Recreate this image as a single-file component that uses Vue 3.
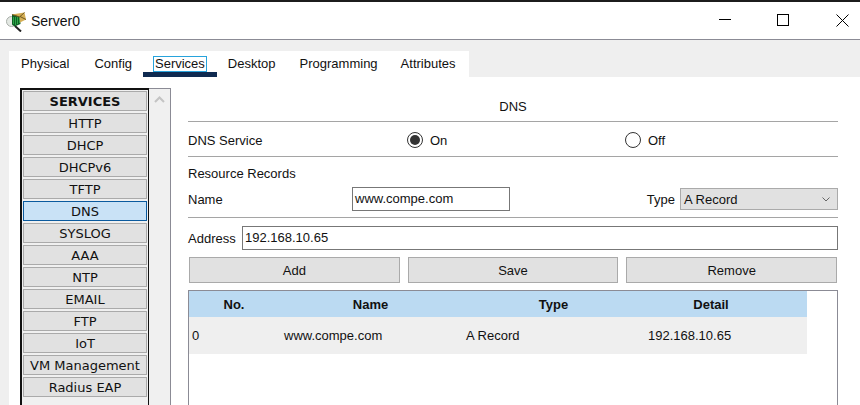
<script setup>
const tabs = ['Physical', 'Config', 'Services', 'Desktop', 'Programming', 'Attributes']
const services = ['HTTP', 'DHCP', 'DHCPv6', 'TFTP', 'DNS', 'SYSLOG', 'AAA', 'NTP', 'EMAIL', 'FTP', 'IoT', 'VM Management', 'Radius EAP']
</script>

<template>
  <div class="window">
    <header class="titlebar">
      <svg class="app-icon" width="21" height="20" viewBox="0 0 21 20">
        <circle cx="5.500" cy="9.500" r="5" fill="#e3e8e3" stroke="#a9aea9" />
        <path d="M9 14l6 5.500" stroke="#222" stroke-width="2" />
        <path d="M6 3l8-1 .5 10-6 2.500-2.500-2z" fill="#0f5f26" />
        <path d="M7.500 5v7M9.500 5v8M11.500 5v7M13.500 5v6" stroke="#2aa746" stroke-width="1" />
        <path d="M5.500 2.500L18.500.5 20 7.500l-6 3-.5-6z" fill="#d4ae55" />
        <path d="M6 2.500l7.500 2.500 5-4.500M20 7.500l-6-3" stroke="#6f5820" fill="none" />
      </svg>
      <span class="title">Server0</span>
      <div class="controls">
        <svg width="13" height="13" viewBox="0 0 13 13"><path d="M0 5.500h12" stroke="#000" fill="none" /></svg>
        <svg width="13" height="13" viewBox="0 0 13 13"><rect x=".5" y=".5" width="11" height="11" stroke="#000" fill="none" /></svg>
        <svg class="close" width="13" height="13" viewBox="0 0 13 13"><path d="M.5.5l12 12M12.500.5l-12 12" stroke="#000" fill="none" /></svg>
      </div>
    </header>

    <div class="body">
      <nav class="tabs">
        <div v-for="t in tabs" :key="t" class="tab" :class="{ active: t === 'Services' }">
          <span class="tab-label">{{ t }}</span>
        </div>
      </nav>

      <div class="panel">
        <aside class="side">
          <div class="list">
            <div class="item head">SERVICES</div>
            <div v-for="s in services" :key="s" class="item" :class="{ selected: s === 'DNS' }">{{ s }}</div>
          </div>
          <div class="scroll">
            <svg width="11" height="7" viewBox="0 0 11 7"><path d="M1 6l4.500-4.500L10 6" stroke="#c4c4c4" stroke-width="2" fill="none" /></svg>
          </div>
        </aside>

        <main class="content">
          <div class="heading">DNS</div>
          <div class="row service">
            <span class="lbl-service">DNS Service</span>
            <span class="radio on"></span><span class="opt-on">On</span>
            <span class="radio"></span><span>Off</span>
          </div>
          <div class="rr">Resource Records</div>
          <div class="row name-row">
            <span class="lbl-name">Name</span>
            <div class="input name-input">www.compe.com</div>
            <span class="lbl-type">Type</span>
            <div class="select">
              <span>A Record</span>
              <svg width="8" height="5" viewBox="0 0 8 5"><path d="M.5.5L4 4 7.500.5" stroke="#666" fill="none" /></svg>
            </div>
          </div>
          <div class="row addr-row">
            <span class="lbl-addr">Address</span>
            <div class="input addr-input">192.168.10.65</div>
          </div>
          <div class="buttons">
            <div class="btn">Add</div>
            <div class="btn">Save</div>
            <div class="btn">Remove</div>
          </div>
          <div class="table">
            <div class="t-row t-head">
              <span>No.</span><span>Name</span><span>Type</span><span>Detail</span>
            </div>
            <div class="t-row t-body">
              <span>0</span><span>www.compe.com</span><span>A Record</span><span>192.168.10.65</span>
            </div>
          </div>
        </main>
      </div>
    </div>
  </div>
</template>

<style scoped>
.window {
  width: 860px;
  height: 405px;
  overflow: hidden;
  background: #fff;
  border-top: 2px solid #1c1c1c;
  box-sizing: border-box;
  font-family: "Liberation Sans", Arial, sans-serif;
  font-size: 13px;
  color: #111;
  display: flex;
  flex-direction: column;
}
.titlebar {
  height: 37px;
  flex: none;
  display: flex;
  align-items: center;
  padding-left: 6px;
  border-bottom: 1px solid #8b8b95;
  box-sizing: content-box;
}
.app-icon { margin-right: 4px; margin-top: 3px; }
.title { font-size: 14px; }
.controls {
  margin-left: auto;
  display: flex;
  gap: 45px;
  padding-right: 11px;
}
.close { margin-left: 1px; }
.body {
  flex: 1;
  min-height: 0;
  background: #efefef;
  padding: 11px 0 0 9px;
  display: flex;
  flex-direction: column;
}
.tabs {
  width: 460px;
  height: 26px;
  flex: none;
  background: #fff;
  display: flex;
  box-sizing: border-box;
}
.tab {
  position: relative;
  padding: 5px 10px 0;
  line-height: 14px;
}
.tab:nth-child(2) { padding-left: 11px; padding-right: 9px; }
.tab:nth-child(4) { padding-left: 9px; }
.tab:nth-child(6) { padding-left: 9px; }
.tab-label { display: inline-block; padding: 0 1px; border: 1px solid transparent; }
.tab.active::after {
  content: "";
  position: absolute;
  left: 0;
  right: 0;
  bottom: 0;
  height: 5px;
  background: #0f2a50;
}
.tab.active .tab-label { border-color: #27a3dc; }
.panel {
  flex: 1;
  min-height: 0;
  background: #fff;
  display: flex;
  padding: 11px 22px 0 11px;
}
.side {
  width: 151px;
  box-sizing: border-box;
  flex: none;
  display: flex;
  border-top: 1px solid #8b8b95;
  border-right: 1px solid #8b8b95;
}
.list {
  width: 129px;
  flex: none;
  box-sizing: border-box;
  margin-top: -1px;
  border: solid #111;
  border-width: 2px 1px 0 2px;
  background: #f0f0f0;
  padding: 1px 1px 0;
  display: flex;
  flex-direction: column;
  gap: 2px;
}
.item {
  width: 124px;
  height: 20px;
  box-sizing: border-box;
  flex: none;
  border: 1px solid #aaa;
  background: #e1e1e1;
  text-align: center;
  font-family: "DejaVu Sans", sans-serif;
  font-size: 13px;
  line-height: 19px;
}
.item.head { font-weight: 700; }
.item.selected { background: #c9e2f6; border-color: #0a5a9e; line-height: 20px; }
.scroll {
  flex: 1;
  background: #f0f0f0;
  display: flex;
  justify-content: center;
  padding-top: 7px;
  align-items: flex-start;
}
.content {
  flex: 1;
  margin-left: 17px;
  min-width: 0;
}
.heading {
  height: 33px;
  line-height: 38px;
  text-align: center;
  border-bottom: 1px solid #a5a5a5;
}
.row { display: flex; align-items: center; }
.service {
  height: 32px;
  padding-top: 2px;
  border-bottom: 1px solid #a5a5a5;
}
.lbl-service { width: 219px; }
.radio {
  width: 16px;
  height: 16px;
  box-sizing: border-box;
  border-radius: 50%;
  border: 1px solid #333;
  background: #fff;
  margin-right: 7px;
  position: relative;
}
.radio.on::after {
  content: "";
  position: absolute;
  inset: 2px;
  border-radius: 50%;
  background: #333;
}
.opt-on { width: 195px; }
.rr {
  height: 29px;
  line-height: 33px;
}
.name-row {
  height: 24px;
  padding: 1px 0 6px;
  border-bottom: 1px solid #a5a5a5;
}
.lbl-name { width: 164px; }
.input {
  height: 24px;
  box-sizing: border-box;
  border: 1px solid #777;
  background: #fff;
  padding-left: 2px;
  line-height: 22px;
}
.name-input { width: 158px; }
.lbl-type { margin-left: auto; margin-right: 5px; }
.select {
  width: 158px;
  height: 22px;
  box-sizing: border-box;
  border: 1px solid #aaa;
  background: #e1e1e1;
  padding: 0 7px 0 3px;
  display: flex;
  align-items: center;
  justify-content: space-between;
}
.addr-row {
  margin-top: 8px;
  height: 24px;
}
.lbl-addr { width: 54px; }
.addr-input { flex: 1; }
.buttons {
  display: flex;
  gap: 8px;
  margin-top: 7px;
  padding: 0 1px;
}
.btn {
  flex: 1;
  height: 26px;
  box-sizing: border-box;
  border: 1px solid #aaa;
  background: #e1e1e1;
  text-align: center;
  line-height: 25px;
}
.table {
  margin-top: 7px;
  height: 200px;
  box-sizing: border-box;
  border: 1px solid #8b8b95;
  border-bottom: 0;
}
.t-row {
  width: 618px;
  display: grid;
  align-items: center;
}
.t-head {
  height: 26px;
  background: #bbdaf2;
  font-weight: 700;
  text-align: center;
  grid-template-columns: 90px 183px 183px 132px;
}
.t-body {
  height: 37px;
  background: #efefef;
  padding-left: 3px;
  box-sizing: border-box;
  grid-template-columns: 92px 182px 182px 1fr;
}
</style>
